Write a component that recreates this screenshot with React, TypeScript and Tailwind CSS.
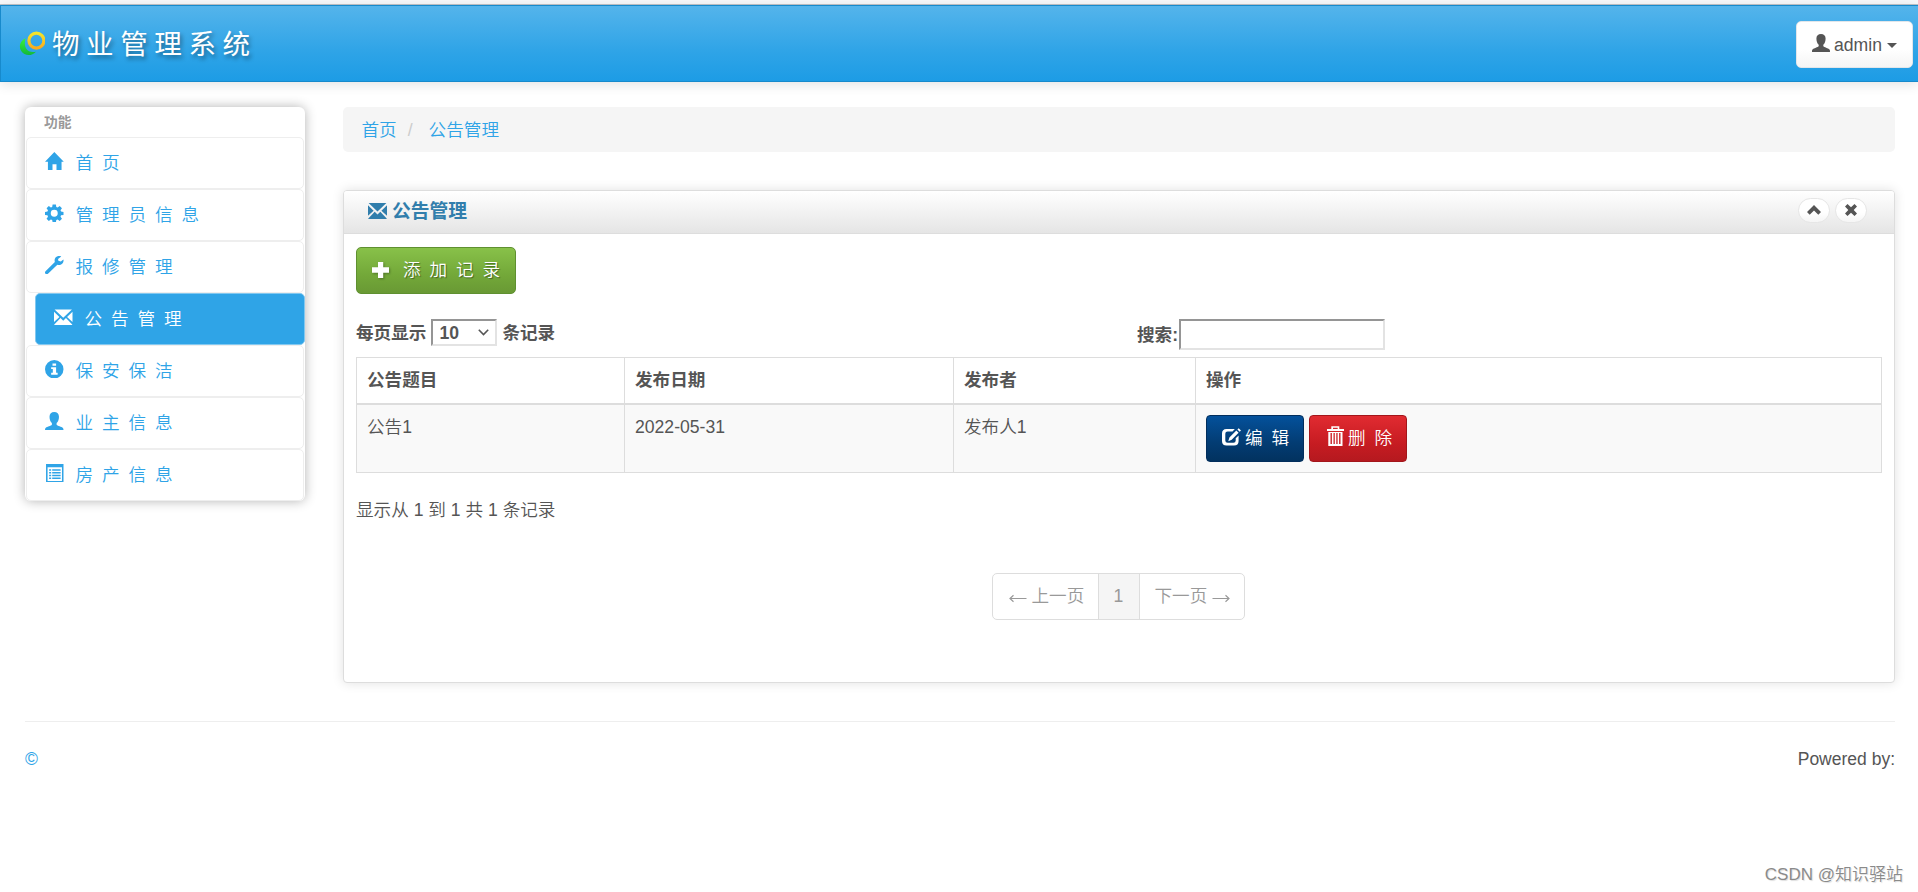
import type { ReactNode } from "react";

type IconProps = { className?: string };

const HomeIcon = ({ className }: IconProps) => (
  <svg viewBox="0 0 19 19" className={className} fill="currentColor">
    <path d="M9.6 0 19.3 9.9H17V18.7H11.8V12.7H7.7V18.7H3V9.9H0Z" />
  </svg>
);

const CogIcon = ({ className }: IconProps) => (
  <svg viewBox="0 0 18 18" className={className} fill="currentColor">
    <path
      fillRule="evenodd"
      d="M7.4.4h3.2l.4 2.4 1.3.5 2-1.4 2.2 2.2-1.4 2 .5 1.3 2.4.3v2.9l-2.4.4-.5 1.3 1.4 2-2.2 2.2-2-1.4-1.3.5-.4 2.2H7.4L7 15.6l-1.3-.5-2 1.4-2.2-2.2 1.4-2L2.4 11 0 10.6V7.7L2.4 7.4 2.9 6.1 1.5 4.1 3.7 1.9 5.7 3.3 7 2.8ZM9 5.7a3.4 3.4 0 1 0 0 6.8a3.4 3.4 0 1 0 0-6.8Z"
    />
  </svg>
);

const WrenchIcon = ({ className }: IconProps) => (
  <svg viewBox="0 0 18 18" className={className} fill="currentColor">
    <path d="M15.8.4C13.8-.4 11.300.1 10.100 1.700 9.200 3 9.200 4.600 9.600 5.900L.5 14.800c-.7.7-.7 1.600 0 2.400.7.8 1.700.8 2.400.1L12 8.600c1.700.5 3.500.1 4.700-1.100C17.900 6.300 18.300 4.700 17.900 3.300L15.400 5.300 13 4.700 12.700 2.800Z" />
  </svg>
);

const EnvelopeIcon = ({ className }: IconProps) => (
  <svg viewBox="0 0 19 16" className={className} fill="currentColor">
    <path d="M.6 0H18.4L9.5 8.6ZM0 2.3 5.6 7.7 0 12.8ZM19 2.3V12.8L13.4 7.7ZM6.7 8.8 9.5 11.5 12.3 8.8 18.7 15.4V16H.3V15.4Z" />
  </svg>
);

const InfoIcon = ({ className }: IconProps) => (
  <svg viewBox="0 0 18 18" className={className} fill="currentColor">
    <path
      fillRule="evenodd"
      d="M9 0a9 9 0 1 0 0 18A9 9 0 1 0 9 0ZM7.3 3.3h3.5v2.3H7.3ZM6 7h4.8v5.5h1.5v1.8H6v-1.800h1.600V8.700H6Z"
    />
  </svg>
);

const UserIcon = ({ className }: IconProps) => (
  <svg viewBox="0 0 18 18" className={className} fill="currentColor">
    <path d="M9 0C6.2 0 4.4 1.6 4.4 4.5c0 2.6.9 5 2.3 6.3v1.5c-.7 1-4.900 1.900-6.200 3.200C0 16 0 17 0 18h18c0-1 0-2-.5-2.500-1.300-1.300-5.500-2.200-6.200-3.200v-1.500c1.400-1.300 2.300-3.700 2.300-6.300C13.600 1.600 11.800 0 9 0Z" />
  </svg>
);

const ListIcon = ({ className }: IconProps) => (
  <svg viewBox="0 0 18 18" className={className} fill="currentColor">
    <path
      fillRule="evenodd"
      d="M1 0h17v18H1ZM2.500 3.200v13.300h14V3.200ZM4 5h2v1.600H4ZM7 5h8.200v1.600H7ZM4 7.700h2v1.600H4ZM7 7.700h8.200v1.600H7ZM4 10.400h2V12H4ZM7 10.400h8.200V12H7ZM4 13.100h2v1.600H4ZM7 13.100h8.200v1.600H7Z"
    />
  </svg>
);

const PlusIcon = ({ className }: IconProps) => (
  <svg viewBox="0 0 17 16" className={className} fill="currentColor">
    <path d="M6 0h5.200v5.300H17v5.400h-5.800V16H6v-5.300H0V5.300h6Z" />
  </svg>
);

const ChevronUpIcon = ({ className }: IconProps) => (
  <svg viewBox="0 0 14 10" className={className} fill="currentColor">
    <path d="M7 0 14 7 11.300 9.800 7 5.600 2.700 9.800 0 7Z" />
  </svg>
);

const RemoveIcon = ({ className }: IconProps) => (
  <svg viewBox="0 0 12 12" className={className} fill="currentColor">
    <path d="M2.500 0 6 3.300 9.500 0 12 2.500 8.700 6 12 9.500 9.500 12 6 8.700 2.500 12 0 9.500 3.300 6 0 2.500Z" />
  </svg>
);

const EditIcon = ({ className }: IconProps) => (
  <svg viewBox="0 0 19 18" className={className} fill="currentColor">
    <path d="M4.500 1h8.300L10.500 3.500H5.600Q3.300 3.500 3.300 5.800v6.700Q3.300 14.800 5.600 14.800h5.800Q13.700 14.800 13.700 12.500V10.300L16.600 7.500V13q0 4.600-4.600 4.600H4.600Q0 17.600 0 13V5.600Q0 1 4.500 1Z" />
    <path d="M14.300 2.500 16.600 4.800 9.700 11.700 6.300 13.200 7.400 9.400ZM16.700.2 19 2.400 17.700 3.700 15.400 1.400Z" />
  </svg>
);

const TrashIcon = ({ className }: IconProps) => (
  <svg viewBox="0 0 17 20" className={className} fill="currentColor">
    <path
      fillRule="evenodd"
      d="M4.300 3V.3h8V3H17v2H0V3ZM6 3h4.700V1.700H6ZM1.300 6h14.200v14H1.300ZM3.500 7v11h1.400V7ZM6.500 7v11h1.300V7ZM9.300 7v11h1.300V7ZM12.100 7v11h1.400V7Z"
    />
  </svg>
);

const Logo = () => (
  <svg viewBox="0 0 26 26" className="h-[26px] w-[26px] shrink-0" fill="none">
    <defs>
      <linearGradient id="ringYellow" x1="0" y1="0" x2="0" y2="1">
        <stop offset="0" stopColor="#f3e52c" />
        <stop offset="1" stopColor="#f9ab1e" />
      </linearGradient>
      <linearGradient id="ringGreen" x1="0" y1="0" x2="0" y2="1">
        <stop offset="0" stopColor="#3af23b" />
        <stop offset="1" stopColor="#12b83a" />
      </linearGradient>
    </defs>
    <path d="M6.6 7.200C1 9.500-.6 15.500 2.200 20C5.300 25 12.500 25.700 17 20.700C13 21.300 10.500 21 8.600 19.300C5.500 16.500 5.300 12 6.600 7.200Z" fill="url(#ringGreen)" />
    <circle cx="17.400" cy="9.600" r="7.500" stroke="url(#ringYellow)" strokeWidth="3.200" />
  </svg>
);

const menu = [
  { title: "首 页", icon: HomeIcon },
  { title: "管 理 员 信 息", icon: CogIcon },
  { title: "报 修 管 理", icon: WrenchIcon },
  { title: "公 告 管 理", icon: EnvelopeIcon, active: true },
  { title: "保 安 保 洁", icon: InfoIcon },
  { title: "业 主 信 息", icon: UserIcon },
  { title: "房 产 信 息", icon: ListIcon },
];

const rows = [{ title: "公告1", date: "2022-05-31", author: "发布人1" }];

const Header = () => (
  <header>
    <div className="h-[4px] bg-[#f8f9fb]" />
    <div className="h-px bg-[#bfc3c8]" />
    <nav className="flex h-[77px] items-start justify-between border border-r-0 border-[#178acc] bg-[linear-gradient(#54b4eb,#2fa4e7_60%,#1d9ce5)] pr-[5px] pl-[18px] shadow-[0_2px_12px_rgba(0,0,0,0.12)]">
      <a href="#" className="flex h-[76px] items-center text-white">
        <Logo />
        <span className="ml-[7px] translate-y-px text-[27.5px] leading-[40px] font-normal tracking-[6.6px] [text-shadow:2px_3px_4px_rgba(0,0,0,0.4)]">物业管理系统</span>
      </a>
      <button className="mt-[15px] flex h-[47px] w-[117px] items-center rounded-[5px] border border-[#e2e6ea] bg-[linear-gradient(#fff,#fff_60%,#f5f5f5)] pl-[15px] text-[#555]">
        <UserIcon className="h-[18px] w-[18px] -translate-y-[2px]" />
        <span className="ml-[4px] translate-y-px">admin</span>
        <span className="ml-[5px] translate-y-px border-x-[5px] border-t-[5px] border-x-transparent border-t-[#555]" />
      </button>
    </nav>
  </header>
);

const Sidebar = () => (
  <aside className="h-[394px] w-[280px] shrink-0 rounded-[6px] bg-white shadow-[0_0_12px_rgba(0,0,0,0.3)]">
    <div className="flex h-[30px] items-center pl-[19px] text-[13.75px] font-bold text-[#999]">功能</div>
    <ul>
      {menu.map((item) => (
        <li
          key={item.title}
          className={
            item.active
              ? "ml-[10px] flex h-[52px] items-center rounded-[5px] border border-[#82c8f0] bg-[#2fa4e7] pl-[18px] text-white"
              : "mx-px flex h-[52px] items-center rounded-[5px] border border-[#eee] pl-[18px] text-[#2fa4e7]"
          }
        >
          <item.icon className="h-[18.5px] w-[18.5px] -translate-y-[2px]" />
          <span className="ml-[12px] -translate-y-[0.5px] tracking-[2px]">{item.title}</span>
        </li>
      ))}
    </ul>
  </aside>
);

const RoundButton = ({ children }: { children: ReactNode }) => (
  <button className="flex h-[25px] w-[32px] items-center justify-center rounded-full border border-[#e6e6e6] bg-[linear-gradient(#fff,#fff_60%,#f5f5f5)] text-[#555]">
    {children}
  </button>
);

const NoticeTable = () => (
  <div className="h-[116px] w-[1526px] border border-[#ddd]">
    <div className="grid h-[47px] grid-cols-[268px_329px_242px_1fr] divide-x divide-[#ddd] border-b-2 border-[#ddd] font-bold">
      {["公告题目", "发布日期", "发布者", "操作"].map((name) => (
        <div key={name} className="flex h-full items-center pl-[10px]">{name}</div>
      ))}
    </div>
    {rows.map((row) => (
      <div key={row.title} className="grid h-[67px] grid-cols-[268px_329px_242px_1fr] divide-x divide-[#ddd] bg-[#f9f9f9]">
        <div className="h-full pt-[10px] pl-[10px]">{row.title}</div>
        <div className="h-full pt-[10px] pl-[10px]">{row.date}</div>
        <div className="h-full pt-[10px] pl-[10px]">{row.author}</div>
        <div className="flex h-full gap-[5px] pt-[10px] pl-[10px] text-white">
          <button className="flex h-[47px] w-[98px] items-center rounded-[4px] border border-[#022e5c] bg-[linear-gradient(#04519b,#033c73_60%,#02325f)] pl-[15px]">
            <EditIcon className="h-[18px] w-[19px] -translate-y-[2px]" />
            <span className="ml-[4px] tracking-[2px]">编 辑</span>
          </button>
          <button className="flex h-[47px] w-[98px] items-center rounded-[4px] border border-[#a3161b] bg-[linear-gradient(#e12b31,#c71c22_60%,#b5191f)] pl-[17px]">
            <TrashIcon className="h-[20px] w-[17px] -translate-y-[3px]" />
            <span className="ml-[4px] tracking-[2px]">删 除</span>
          </button>
        </div>
      </div>
    ))}
  </div>
);

const Arrow = ({ right = false }: { right?: boolean }) => (
  <svg viewBox="0 0 18 9" className={right ? "mt-[3px] h-[9px] w-[18px] rotate-180" : "mt-[3px] h-[9px] w-[18px]"} fill="none" stroke="#999" strokeWidth="1.2">
    <path d="M17.5 4.5H1M4.5 1.2 1 4.5 4.5 7.8" />
  </svg>
);

const Panel = () => (
  <section className="mt-[38px] h-[493px] rounded-[4px] border border-[#ddd] bg-white shadow-[0_0_12px_rgba(0,0,0,0.12)]">
    <div className="flex h-[43px] items-center justify-between rounded-t-[3px] border-b border-[#ddd] bg-[linear-gradient(#fff,#e5e5e5)] pr-[27px] pl-[24px]">
      <h2 className="flex items-center text-[18.75px] font-bold text-[#317eac]">
        <EnvelopeIcon className="h-[16px] w-[19px] -translate-y-px" />
        <span className="ml-[5px] -translate-y-px">公告管理</span>
      </h2>
      <div className="flex -translate-y-[2px] gap-[5px]">
        <RoundButton><ChevronUpIcon className="h-[10px] w-[14px]" /></RoundButton>
        <RoundButton><RemoveIcon className="h-[12px] w-[12px]" /></RoundButton>
      </div>
    </div>
    <div className="pt-[13px] pl-[12px]">
      <button className="flex h-[47px] w-[160px] items-center rounded-[5px] border border-[#5f9030] bg-[linear-gradient(#88c149,#73a839_60%,#699934)] pl-[15px] text-white">
        <PlusIcon className="h-[16px] w-[17px] -translate-y-px drop-shadow-[1px_1px_1px_rgba(0,0,0,0.3)]" />
        <span className="ml-[14px] tracking-[2px] [text-shadow:1px_1px_1px_rgba(0,0,0,0.4)]">添 加 记 录</span>
      </button>
      <div className="mt-[25px] flex h-[38px] items-start font-bold">
        <label className="flex w-[781px] items-center">
          <span className="translate-y-px">每页显示</span>
          <span className="mr-[5px] ml-[5px] flex h-[27px] w-[66px] items-center justify-between border-2 border-t-[#959595] border-r-[#e3e3e3] border-b-[#e3e3e3] border-l-[#959595] bg-white pr-[6px] pl-[6px]">
            <span className="translate-y-px">10</span>
            <svg viewBox="0 0 11 7" className="h-[7px] w-[11px]" fill="none" stroke="#555" strokeWidth="1.6">
              <path d="M.8.8 5.5 5.5 10.2.8" />
            </svg>
          </span>
          <span className="translate-y-px">条记录</span>
        </label>
        <label className="flex items-center">
          <span className="translate-y-px">搜索:</span>
          <input type="text" className="ml-px h-[31px] w-[206px] border-2 border-t-[#959595] border-r-[#e3e3e3] border-b-[#e3e3e3] border-l-[#959595] bg-white outline-none" />
        </label>
      </div>
      <NoticeTable />
      <div className="mt-[25px] h-[25px]">显示从 1 到 1 共 1 条记录</div>
    </div>
    <div className="mt-[50px] flex justify-center pr-[2px]">
      <div className="flex h-[47px] w-[253px] overflow-hidden rounded-[5px] border border-[#ddd] text-[#999]">
        <a className="flex w-[105px] items-center pl-[16px]">
          <Arrow />
          <span className="ml-[5px]">上一页</span>
        </a>
        <a className="flex w-[42px] items-center justify-center border-x border-[#ddd] bg-[#f5f5f5]">1</a>
        <a className="flex flex-1 items-center pl-[15px]">
          <span className="mr-[5px]">下一页</span>
          <Arrow right />
        </a>
      </div>
    </div>
  </section>
);

export default function App() {
  return (
    <div className="min-h-[892px] overflow-hidden bg-white font-['Liberation_Sans','Noto_Sans_CJK_SC',sans-serif] text-[17.6px] leading-[25px] font-[350] text-[#555]">
      <Header />
      <main className="flex gap-[38px] pt-[25px] pr-[23px] pl-[25px]">
        <Sidebar />
        <div className="flex-1">
          <div className="flex h-[45px] items-center rounded-[5px] bg-[#f5f5f5] pt-px pl-[18.5px] text-[#2fa4e7]">
            <a>首页</a>
            <span className="mr-[16px] ml-[11px] text-[#ccc]">/</span>
            <a>公告管理</a>
          </div>
          <Panel />
        </div>
      </main>
      <footer className="mt-[38px] mr-[23px] ml-[25px] flex justify-between border-t border-[#eee] pt-[25px] text-[17.5px]">
        <a className="text-[#2fa4e7]">©</a>
        <span>Powered by:</span>
      </footer>
      <div className="mt-[90px] mr-[15px] flex justify-end text-[17px] text-[#8a8a8a] [text-shadow:-1px_-1px_0_#fff,1px_1px_1px_#ddd]">CSDN @知识驿站</div>
    </div>
  );
}
